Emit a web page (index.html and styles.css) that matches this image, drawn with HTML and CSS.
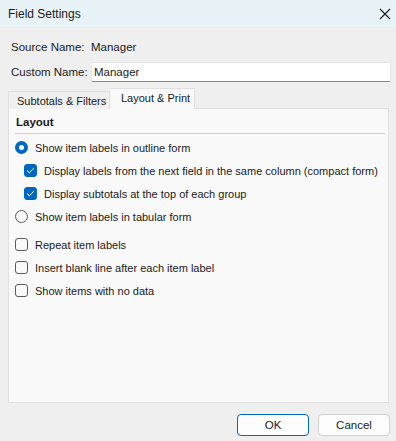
FILE: index.html
```html
<!DOCTYPE html>
<html lang="en">
<head>
    <meta charset="UTF-8">
    <title>Field Settings</title>
    <link rel="stylesheet" href="styles.css">
</head>
<body>
    <div class="dialog">
        <div class="titlebar">
            <span>Field Settings</span>
            <svg class="close" width="12" height="12" viewBox="0 0 12 12"><path d="M1 1 L11 11 M11 1 L1 11" stroke="#1a1a1a" stroke-width="1.1"/></svg>
        </div>

        <div class="names">
            <div class="row">
                <span class="lbl">Source Name:</span>
                <span class="val">Manager</span>
            </div>
            <div class="row">
                <span class="lbl">Custom Name:</span>
                <div class="input">Manager</div>
            </div>
        </div>

        <div class="tabs">
            <div class="tab">Subtotals &amp; Filters</div>
            <div class="tab active">Layout &amp; Print</div>
        </div>

        <div class="panel">
            <div class="group-title">Layout</div>
            <div class="opts">
                <div class="opt"><span class="radio on"></span>Show item labels in outline form</div>
                <div class="opt sub"><span class="check on"><svg width="9" height="7" viewBox="0 0 9 7"><path d="M1 3.5 L3.4 5.8 L8 1" fill="none" stroke="#fff" stroke-width="1"/></svg></span>Display labels from the next field in the same column (compact form)</div>
                <div class="opt sub"><span class="check on"><svg width="9" height="7" viewBox="0 0 9 7"><path d="M1 3.5 L3.4 5.8 L8 1" fill="none" stroke="#fff" stroke-width="1"/></svg></span>Display subtotals at the top of each group</div>
                <div class="opt"><span class="radio"></span>Show item labels in tabular form</div>
            </div>
            <div class="opts second">
                <div class="opt"><span class="check"></span>Repeat item labels</div>
                <div class="opt"><span class="check"></span>Insert blank line after each item label</div>
                <div class="opt"><span class="check"></span>Show items with no data</div>
            </div>
        </div>

        <div class="buttons">
            <button class="btn primary">OK</button>
            <button class="btn">Cancel</button>
        </div>
    </div>
</body>
</html>
```

FILE: styles.css
```css
body { margin: 0; background: #efefef; font-family: "Liberation Sans", Arial, sans-serif; font-size: 11px; color: #1a1a1a; }
.dialog { width: 396px; height: 441px; display: flex; flex-direction: column; }

.titlebar { height: 27px; background: #e8f3f7; display: flex; align-items: center; justify-content: space-between; padding: 0 5px 0 8px; border-bottom: 1px solid #e3ecef; }
.titlebar span { font-size: 12px; }
.close { margin-top: 1px; }

.names { padding: 9px 5px 0 11px; display: flex; flex-direction: column; gap: 6px; }
.row { display: flex; align-items: center; height: 19px; white-space: nowrap; font-size: 11.5px; }
.lbl { width: 80px; flex-shrink: 0; }
.input { flex: 1; height: 18px; line-height: 18px; background: #fff; border: 1px solid #e5e5e5; border-bottom: 1px solid #888; padding-left: 2px; border-radius: 2px; }

.tabs { display: flex; align-items: flex-end; margin: 7px 0 0 8px; height: 21px; position: relative; z-index: 1; margin-bottom: -1px; white-space: nowrap; font-size: 11px; }
.tab { width: 102px; box-sizing: border-box; height: 18px; line-height: 18px; padding-left: 8px; border: 1px solid #e0e0e0; border-bottom: none; background: #f0f0f0; }
.tab.active { width: 85px; height: 21px; line-height: 19px; background: #f9f9f9; padding-left: 11px; border-left: none; }

.panel { margin: 0 7px 0 8px; height: 295px; background: #f9f9f9; border: 1px solid #e0e0e0; box-sizing: border-box; padding: 0 3px 0 6px; }
.group-title { font-weight: bold; font-size: 11.5px; height: 24px; line-height: 26px; border-bottom: 1px solid #d0d0d0; padding-left: 1px; }
.opts { padding-top: 2px; }
.opts.second { padding-top: 5px; }
.opt { display: flex; align-items: center; height: 23px; white-space: nowrap; }
.opt.sub { padding-left: 9px; }

.radio { width: 11px; height: 11px; border: 1px solid #5c5c5c; border-radius: 50%; margin-right: 7px; background: #f9f9f9; }
.radio.on { width: 5px; height: 5px; border: 4px solid #0067c0; background: #fff; }
.check { width: 11px; height: 11px; border: 1px solid #5c5c5c; border-radius: 3px; margin-right: 7px; display: flex; align-items: center; justify-content: center; background: #f9f9f9; }
.check.on { background: #0067c0; border-color: #0067c0; }

.buttons { display: flex; justify-content: flex-end; gap: 9px; padding: 11px 6px 0 0; }
.btn { width: 72px; height: 22px; font-family: inherit; font-size: 11.5px; color: #1a1a1a; background: #fdfdfd; border: 1px solid #d0d0d0; border-radius: 4px; padding: 0; }
.btn.primary { border-color: #0067c0; }
```
